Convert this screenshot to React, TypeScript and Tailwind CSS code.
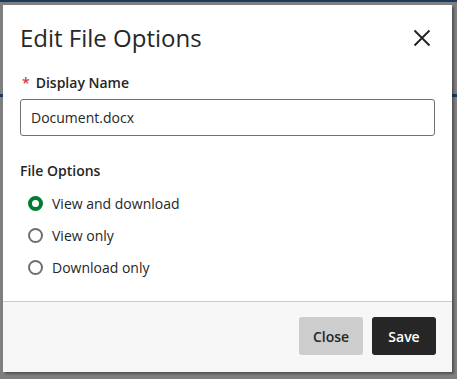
import { useState } from "react";

const options = ["View and download", "View only", "Download only"];

function Radio({ checked }: { checked: boolean }) {
  return checked ? (
    <span className="block h-[15px] w-[15px] rounded-full border-[4px] border-[#037b2f] bg-white" />
  ) : (
    <span className="block h-[15px] w-[15px] rounded-full border-2 border-[#6f6f6f] bg-white" />
  );
}

export default function App() {
  const [choice, setChoice] = useState(0);

  return (
    <div
      className="relative h-[379px] w-[457px] overflow-hidden bg-[#7f7f7f] pl-[3px] pt-[5px]"
      style={{ fontFamily: '"Open Sans", "Noto Sans", sans-serif' }}
    >
      {/* page behind the overlay */}
      <div className="absolute left-0 top-0 h-[2px] w-full bg-[#1c3a60]" />
      <div className="absolute left-0 top-[94px] h-[3px] w-full bg-[#1c3a60]" />

      <div className="relative flex h-[367px] w-[449px] flex-col bg-white shadow-[2px_2px_2px_rgba(0,0,0,0.35)]">
        <div className="flex-1 px-[17px] pt-[17px]">
          <div className="flex items-center justify-between">
            <h2 className="text-[24px] leading-[32px] text-[#262626]">Edit File Options</h2>
            <button type="button" aria-label="Close" className="mr-[4px] text-[#262626]">
              <svg width="18" height="18" viewBox="0 0 18 18" fill="none" stroke="currentColor" strokeWidth="2">
                <path d="M1.5 1.5 16.5 16.5M16.5 1.5 1.5 16.5" />
              </svg>
            </button>
          </div>

          <label className="mt-[19px] flex items-center text-[14px] font-semibold leading-[20px] text-[#262626]">
            <span className="ml-[2px] mr-[6px] text-[#d0393c]">*</span>
            Display Name
          </label>
          <div className="mt-[6px] flex h-[37px] items-center rounded-[3px] border border-[#707070] px-[10px] text-[14px] text-[#262626]">
            Document.docx
          </div>

          <div className="mt-[25px] text-[14px] font-semibold leading-[20px] text-[#262626]">File Options</div>
          <div className="mt-[6px] flex flex-col">
            {options.map((label, i) => (
              <button
                key={label}
                type="button"
                onClick={() => setChoice(i)}
                className="flex h-[32px] items-center pl-[8px] text-left text-[14px] text-[#262626]"
              >
                <Radio checked={choice === i} />
                <span className="ml-[9px]">{label}</span>
              </button>
            ))}
          </div>
        </div>

        <div className="flex h-[71px] items-start justify-end gap-[9px] border-t border-[#cdcdcd] bg-[#f7f7f7] pr-[16px] pt-[15px]">
          <button
            type="button"
            className="h-[38px] w-[64px] rounded-[3px] bg-[#cdcdcd] text-[14px] font-semibold text-[#262626]"
          >
            Close
          </button>
          <button
            type="button"
            className="h-[38px] w-[64px] rounded-[3px] bg-[#262626] text-[14px] font-semibold text-white"
          >
            Save
          </button>
        </div>
      </div>
    </div>
  );
}
